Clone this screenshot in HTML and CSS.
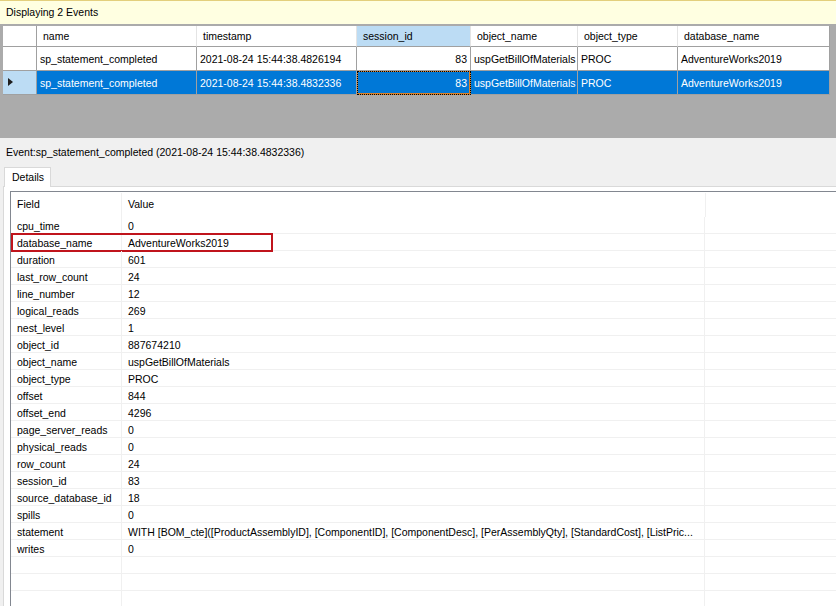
FILE: index.html
```html
<!DOCTYPE html>
<html>
<head>
<meta charset="utf-8">
<link rel="stylesheet" href="styles.css">
</head>
<body>
<div class="infobar">Displaying 2 Events</div>
<div class="gridarea">
  <div class="grid">
    <div class="c rh hd"></div>
    <div class="c hd">name</div>
    <div class="c hd">timestamp</div>
    <div class="c hd sorted">session_id</div>
    <div class="c hd">object_name</div>
    <div class="c hd">object_type</div>
    <div class="c hd last">database_name</div>

    <div class="c rh"></div>
    <div class="c">sp_statement_completed</div>
    <div class="c">2021-08-24 15:44:38.4826194</div>
    <div class="c num">83</div>
    <div class="c">uspGetBillOfMaterials</div>
    <div class="c">PROC</div>
    <div class="c last">AdventureWorks2019</div>

    <div class="c rh rhsel"><span class="tri"></span></div>
    <div class="c sel">sp_statement_completed</div>
    <div class="c sel">2021-08-24 15:44:38.4832336</div>
    <div class="c sel num focus">83</div>
    <div class="c sel">uspGetBillOfMaterials</div>
    <div class="c sel">PROC</div>
    <div class="c sel last">AdventureWorks2019</div>
  </div>
</div>
<div class="detail">
  <div class="evlabel">Event:sp_statement_completed (2021-08-24 15:44:38.4832336)</div>
  <div class="tabs"><div class="tab">Details</div></div>
  <div class="tabpage">
    <div class="list">
      <div class="lhead">
        <div class="lc f">Field</div>
        <div class="lc v">Value</div>
        <div class="lc x"></div>
      </div>
      <div class="lrow"><div class="lc f">cpu_time</div><div class="lc v">0</div><div class="lc x"></div></div>
      <div class="lrow hl"><div class="lc f">database_name</div><div class="lc v">AdventureWorks2019</div><div class="lc x"></div><div class="redbox"></div></div>
      <div class="lrow"><div class="lc f">duration</div><div class="lc v">601</div><div class="lc x"></div></div>
      <div class="lrow"><div class="lc f">last_row_count</div><div class="lc v">24</div><div class="lc x"></div></div>
      <div class="lrow"><div class="lc f">line_number</div><div class="lc v">12</div><div class="lc x"></div></div>
      <div class="lrow"><div class="lc f">logical_reads</div><div class="lc v">269</div><div class="lc x"></div></div>
      <div class="lrow"><div class="lc f">nest_level</div><div class="lc v">1</div><div class="lc x"></div></div>
      <div class="lrow"><div class="lc f">object_id</div><div class="lc v">887674210</div><div class="lc x"></div></div>
      <div class="lrow"><div class="lc f">object_name</div><div class="lc v">uspGetBillOfMaterials</div><div class="lc x"></div></div>
      <div class="lrow"><div class="lc f">object_type</div><div class="lc v">PROC</div><div class="lc x"></div></div>
      <div class="lrow"><div class="lc f">offset</div><div class="lc v">844</div><div class="lc x"></div></div>
      <div class="lrow"><div class="lc f">offset_end</div><div class="lc v">4296</div><div class="lc x"></div></div>
      <div class="lrow"><div class="lc f">page_server_reads</div><div class="lc v">0</div><div class="lc x"></div></div>
      <div class="lrow"><div class="lc f">physical_reads</div><div class="lc v">0</div><div class="lc x"></div></div>
      <div class="lrow"><div class="lc f">row_count</div><div class="lc v">24</div><div class="lc x"></div></div>
      <div class="lrow"><div class="lc f">session_id</div><div class="lc v">83</div><div class="lc x"></div></div>
      <div class="lrow"><div class="lc f">source_database_id</div><div class="lc v">18</div><div class="lc x"></div></div>
      <div class="lrow"><div class="lc f">spills</div><div class="lc v">0</div><div class="lc x"></div></div>
      <div class="lrow"><div class="lc f">statement</div><div class="lc v">WITH [BOM_cte]([ProductAssemblyID], [ComponentID], [ComponentDesc], [PerAssemblyQty], [StandardCost], [ListPric...</div><div class="lc x"></div></div>
      <div class="lrow"><div class="lc f">writes</div><div class="lc v">0</div><div class="lc x"></div></div>
      <div class="lrow"><div class="lc f"></div><div class="lc v"></div><div class="lc x"></div></div>
      <div class="lrow"><div class="lc f"></div><div class="lc v"></div><div class="lc x"></div></div>
      <div class="lrow"><div class="lc f"></div><div class="lc v"></div><div class="lc x"></div></div>
    </div>
  </div>
</div>
</body>
</html>
```
FILE: styles.css
```css
html, body {
  margin: 0;
  padding: 0;
}
body {
  width: 836px;
  height: 606px;
  overflow: hidden;
  font-family: "Liberation Sans", Arial, sans-serif;
  font-size: 10.5px;
  color: #000;
  background: #f0f0f0;
}
.infobar {
  height: 23px;
  border-top: 1px solid #e3cf7c;
  background: #ffffe1;
  padding-left: 6px;
  line-height: 22px;
  box-sizing: content-box;
}
.gridarea {
  background: #ababab;
  height: 112px;
  padding-top: 2px;
  padding-left: 3px;
}
.grid {
  display: grid;
  grid-template-columns: 34px 160px 160px 114px 107px 100px 152px;
  grid-template-rows: 21px 24px 24px;
  width: 827px;
}
.c {
  box-sizing: border-box;
  border-right: 1px solid #a0a0a0;
  border-bottom: 1px solid #a0a0a0;
  background: #fff;
  padding-left: 3px;
  line-height: 24px;
  white-space: nowrap;
  overflow: hidden;
}
.c.hd {
  border-right: 1px solid #e4e4e4;
  padding-left: 6px;
  line-height: 20px;
}
.c.hd.last {
  border-right: 1px solid #a0a0a0;
}
.c.hd.sorted {
  background: #bcdcf4;
}
.c.rh {
  padding: 0;
}
.c.rh.hd {
  border-right: 1px solid #a0a0a0;
}
.c.rhsel {
  background: #bcdcf4;
  position: relative;
}
.tri {
  position: absolute;
  left: 5px;
  top: 7px;
  width: 0;
  height: 0;
  border-top: 4.5px solid transparent;
  border-bottom: 4.5px solid transparent;
  border-left: 5px solid #1e1e1e;
}
.c.num {
  text-align: right;
  padding-right: 3px;
}
.c.sel {
  background: #0078d7;
  color: #fff;
}
.c.focus {
  outline: 1px dotted #000;
  outline-offset: -1px;
  border-color: #d9822b;
  box-shadow: inset 0 0 0 1px #d9822b;
}
.detail {
  background: #f0f0f0;
}
.evlabel {
  height: 29px;
  line-height: 28px;
  padding-left: 6px;
}
.tabs {
  height: 19px;
  display: flex;
  padding-left: 4px;
}
.tab {
  box-sizing: border-box;
  width: 47px;
  height: 20px;
  border: 1px solid #d9d9d9;
  border-bottom: none;
  background: #fff;
  padding-left: 7px;
  line-height: 19px;
  position: relative;
  z-index: 1;
}
.tabpage {
  margin-left: 3px;
  border-top: 1px solid #d9d9d9;
  border-left: 1px solid #d9d9d9;
  background: #fff;
  padding: 4px 0 0 6px;
  height: 420px;
}
.list {
  border-top: 1px solid #828790;
  border-left: 1px solid #828790;
  background: #fff;
}
.lhead {
  display: flex;
  height: 24px;
  padding-top: 1px;
}
.lhead .lc {
  line-height: 23px;
  border-right: 1px solid #e5e5e5;
}
.lhead .f {
  width: 103px;
}
.lrow {
  display: flex;
  height: 16px;
  border-bottom: 1px solid #f0f0f0;
  position: relative;
}
.lc {
  box-sizing: border-box;
  padding-left: 6px;
  line-height: 19px;
  white-space: nowrap;
  overflow: hidden;
  flex: none;
}
.lc.f {
  width: 111px;
  border-right: 1px solid #f0f0f0;
}
.lc.v {
  width: 583px;
  border-right: 1px solid #f0f0f0;
}
.lhead .lc.v {
  width: 584px;
}
.lc.x {
  flex: 1;
  border-right: none;
}
.lhead .lc.x {
  border-right: none;
}
.redbox {
  position: absolute;
  left: 0;
  top: -1px;
  width: 262px;
  height: 19px;
  box-sizing: border-box;
  border: 2px solid #c0141c;
}
```
